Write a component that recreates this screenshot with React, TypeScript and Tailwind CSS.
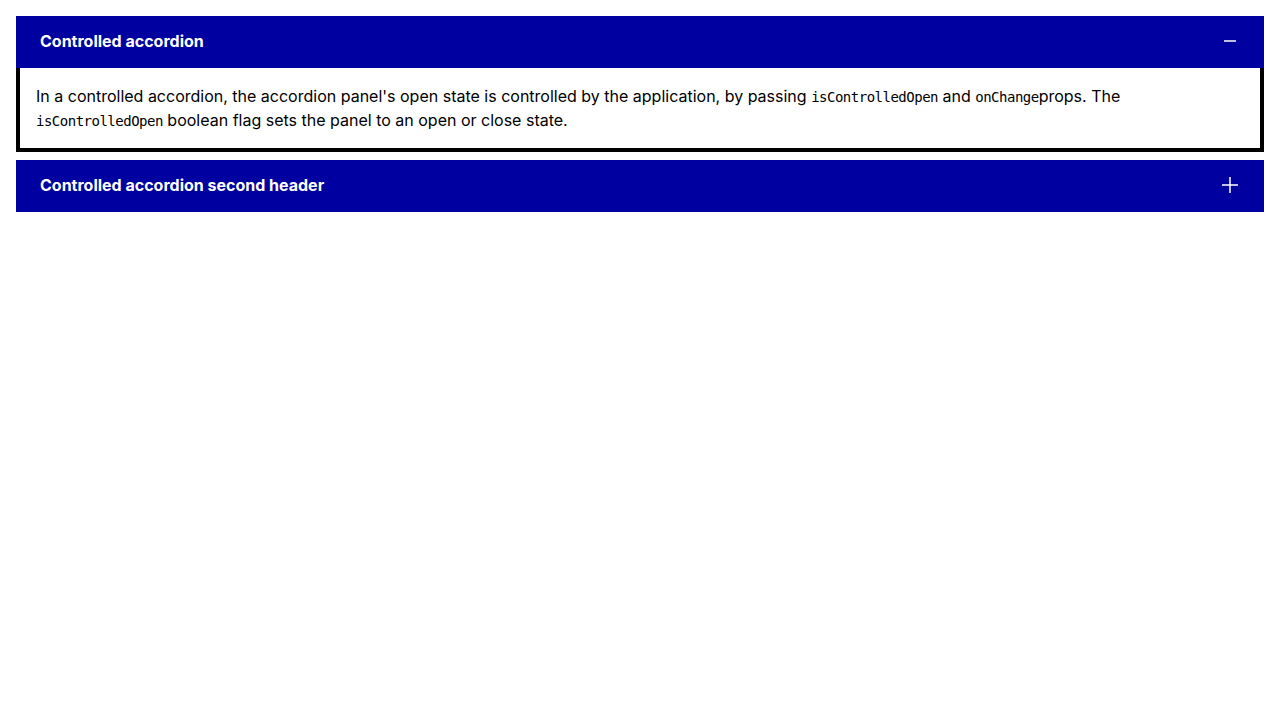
import { useState } from "react";

const codeClass = "font-['DejaVu_Sans_Mono',monospace] text-[14px] leading-none tracking-[-0.5px]";

const items = [
  {
    id: "first",
    title: "Controlled accordion",
    body: (
      <>
        In a controlled accordion, the accordion panel's open state is controlled by the
        application, by passing <code className={codeClass}>isControlledOpen</code> and{" "}
        <code className={codeClass}>onChange</code>props. The{" "}
        <code className={codeClass}>isControlledOpen</code> boolean flag sets the panel
        to an open or close state.
      </>
    ),
  },
  {
    id: "second",
    title: "Controlled accordion second header",
    body: <>Content for the second panel.</>,
  },
];

function MinusIcon() {
  return (
    <svg width="16" height="16" viewBox="0 0 16 16" fill="none" stroke="currentColor" strokeWidth="1.5">
      <path d="M2 8h12" />
    </svg>
  );
}

function PlusIcon() {
  return (
    <svg width="16" height="16" viewBox="0 0 16 16" fill="none" stroke="currentColor" strokeWidth="1.5">
      <path d="M0 8h16M8 0v16" />
    </svg>
  );
}

export default function App() {
  const [openId, setOpenId] = useState<string | null>("first");

  return (
    <div className="flex min-h-[720px] flex-col gap-2 bg-white p-4 font-['Inter',sans-serif] text-black">
      {items.map((item) => {
        const isOpen = openId === item.id;
        return (
          <div key={item.id}>
            <button
              type="button"
              onClick={() => setOpenId(isOpen ? null : item.id)}
              className="flex h-[52px] w-full items-center justify-between bg-[#0000a0] pb-0.5 pl-6 pr-[26px] text-left text-base font-bold text-white"
            >
              <span>{item.title}</span>
              {isOpen ? <MinusIcon /> : <PlusIcon />}
            </button>
            {isOpen ? (
              <div className="border-4 border-t-0 border-black px-4 py-4 text-base leading-6">
                {item.body}
              </div>
            ) : null}
          </div>
        );
      })}
    </div>
  );
}
